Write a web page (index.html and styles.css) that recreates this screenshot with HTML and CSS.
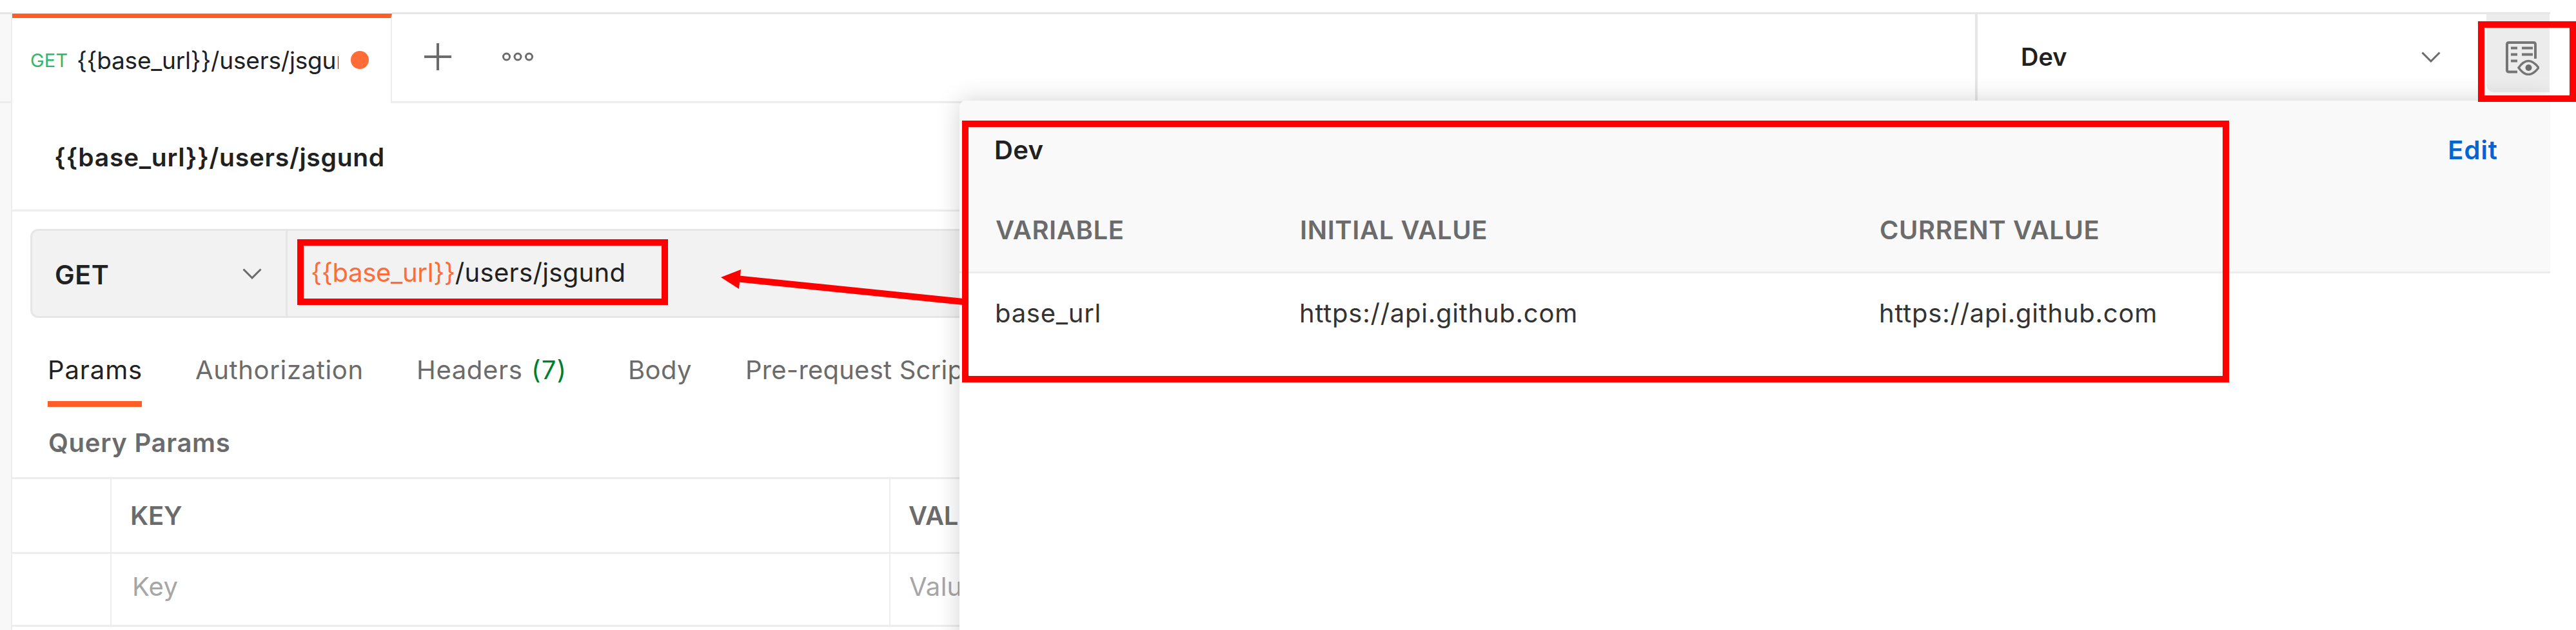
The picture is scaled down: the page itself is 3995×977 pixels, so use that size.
FILE: index.html
```html
<!DOCTYPE html>
<html lang="en">
<head>
<meta charset="utf-8">
<title>Request builder</title>
<link rel="stylesheet" href="styles.css">
</head>
<body>
<div class="app">
  <header class="tabbar">
    <div class="gutter"></div>
    <div class="tab">
      <span class="t tab-method">GET</span>
      <div class="tab-clip"><span class="t tab-name">{{base_url}}/users/jsgund</span></div>
      <i class="dot"></i>
    </div>
    <div class="tab-tools">
      <svg class="plus" viewBox="0 0 42 42"><path d="M21 0V42M0 21H42"/></svg>
      <svg class="more" viewBox="0 0 50 14"><circle cx="7.500" cy="7" r="5"/><circle cx="25" cy="7" r="5"/><circle cx="42.500" cy="7" r="5"/></svg>
    </div>
    <div class="env">
      <span class="t env-name">Dev</span>
      <svg class="chev env-chev" viewBox="0 0 30 17"><path d="M1.500 1.500L15 15L28.500 1.500"/></svg>
      <div class="eye-btn">
        <svg class="eye" viewBox="0 0 54 54"><path d="M20 48.500H7Q4 48.500 4 45.500V6Q4 3 7 3H45Q48 3 48 6V28" stroke-width="4"/><path d="M10 11.500H20M27 11.500H44M10 21.500H20M27 21.500H44M10 31.500H20" stroke-width="4"/><path d="M22 42Q37 21 53 42Q37 63 22 42Z" stroke-width="3.500"/><circle cx="37.500" cy="42" r="5" class="pupil"/></svg>
      </div>
    </div>
  </header>
  <div class="body">
    <div class="gutter"></div>
    <main class="work">
      <div class="title"><span class="t">{{base_url}}/users/jsgund</span></div>
      <div class="urlbar">
        <div class="method"><span class="t">GET</span><svg class="chev" viewBox="0 0 30 17"><path d="M1.500 1.500L15 15L28.500 1.500"/></svg></div>
        <div class="url"><span class="t var">{{base_url}}</span><span class="t path">/users/jsgund</span></div>
      </div>
      <nav class="subtabs">
        <span class="t on">Params</span>
        <span class="t st-auth">Authorization</span>
        <span class="t st-head">Headers</span>
        <span class="t count">(7)</span>
        <span class="t st-body">Body</span>
        <span class="t st-pre">Pre-request Script</span>
      </nav>
      <div class="section"><span class="t">Query Params</span></div>
      <div class="grid">
        <div class="row head"><div></div><div class="cell"><span class="t">KEY</span></div><div class="cell value"><span class="t">VALUE</span></div></div>
        <div class="row ph"><div></div><div class="cell"><span class="t">Key</span></div><div class="cell value"><span class="t">Value</span></div></div>
      </div>
    </main>
  </div>
  <aside class="popover">
    <div class="pop-head">
      <div class="pop-title"><span class="t name">Dev</span><span class="t edit">Edit</span></div>
      <div class="pop-cols"><span class="t">VARIABLE</span><span class="t">INITIAL VALUE</span><span class="t">CURRENT VALUE</span></div>
    </div>
    <div class="pop-cols vals"><span class="t">base_url</span><span class="t">https://api.github.com</span><span class="t">https://api.github.com</span></div>
  </aside>
  <div class="mark mark-url"></div>
  <div class="mark mark-vars"></div>
  <div class="mark mark-eye"></div>
  <svg class="arrow" viewBox="0 0 380 60"><path d="M28 17.500L376 53" class="shaft"/><path d="M0 15L31 3L28 33Z"/></svg>
</div>
</body>
</html>
```
FILE: styles.css
```css
* { box-sizing: border-box; }
body { margin: 0; background: #fff; font-family: Inter, "Liberation Sans", sans-serif; color: #212121; }
.app { position: relative; width: 3995px; height: 977px; padding: 19px 40px 0 0; overflow: hidden; display: flex; flex-direction: column; }
.t { white-space: nowrap; line-height: 50px; font-size: 40px; letter-spacing: .65px; flex: none; }
svg { display: block; flex: none; fill: none; }

.tabbar { display: flex; height: 141px; flex: none; }
.gutter { width: 19px; flex: none; background: #f8f8f8; border-right: 2px solid #ededed; }
.tabbar .gutter { border-top: 3px solid #e6e6e6; border-bottom: 3px solid #ededed; }
.tab { width: 589px; flex: none; margin-top: 2px; border-top: 7px solid #ff5e26; border-right: 2px solid #ededed; display: flex; padding: 41px 0 0 28px; }
.tab-method { font-size: 29px; color: #2fb865; width: 72px; letter-spacing: .2px; }
.tab-clip { width: 406px; overflow: hidden; height: 60px; }
.tab-name { font-size: 37px; letter-spacing: -.18px; display: block; }
.dot { width: 28px; height: 28px; border-radius: 50%; background: #ff6c37; margin: 10px 0 0 19px; }
.tab-tools { width: 2455px; flex: none; border-top: 3px solid #e6e6e6; border-bottom: 3px solid #ededed; display: flex; padding: 45px 0 0 50px; gap: 78px; }
.plus { width: 42px; height: 42px; stroke: #6b6b6b; stroke-width: 4; }
.more { width: 50px; height: 14px; stroke: #6b6b6b; stroke-width: 3; margin-top: 14px; }
.env { width: 892px; flex: none; border-top: 3px solid #e6e6e6; border-bottom: 3px solid #ededed; border-left: 4px solid #e6e6e6; display: flex; }
.env-name { font-size: 38px; font-weight: 600; letter-spacing: 0; margin: 41px 0 0 67px; width: 621px; }
.chev { width: 30px; height: 17px; stroke: #6b6b6b; stroke-width: 3; }
.env-chev { margin: 58px 71px 0 0; }
.eye-btn { width: 98px; height: 121px; background: #ececec; border-radius: 0 0 0 12px; padding: 41px 0 0 28px; }
.eye { width: 54px; height: 54px; stroke: #757575; }
.pupil { fill: #6b6b6b; stroke: none; }

.body { display: flex; flex: 1; }
.work { flex: 1; }
.title { height: 168px; border-bottom: 3px solid #ededed; padding: 59px 0 0 65px; }
.title .t { font-size: 39px; font-weight: 600; letter-spacing: .72px; display: block; }
.urlbar { margin: 27px 0 0 28px; height: 138px; border: 3px solid #e6e6e6; border-radius: 12px; background: #f2f2f2; display: flex; }
.method { width: 396px; border-right: 3px solid #e6e6e6; display: flex; padding: 43px 37px 0 35px; justify-content: space-between; }
.method .t { font-weight: 600; font-size: 41px; }
.method .chev { margin-top: 15px; }
.url { display: flex; padding: 40px 0 0 36px; }
.var { color: #ff6c37; letter-spacing: -.3px; }
.path { letter-spacing: .35px; }
.subtabs { display: flex; height: 138px; padding: 56px 0 0 55px; color: #6b6b6b; }
.on { color: #212121; height: 82px; border-bottom: 9px solid #ff5e26; width: 146px; margin-right: 83px; letter-spacing: .9px; }
.st-auth { width: 343px; }
.st-head { width: 178px; }
.count { color: #007f31; width: 150px; letter-spacing: 1.1px; }
.st-body { width: 182px; letter-spacing: .4px; }
.st-pre { letter-spacing: .2px; }
.section { height: 109px; padding: 31px 0 0 56px; color: #6b6b6b; }
.section .t { font-weight: 600; letter-spacing: .7px; display: block; }
.grid { border-top: 3px solid #ededed; }
.row { display: grid; grid-template-columns: 152px 1208px 1fr; height: 116px; border-bottom: 3px solid #ededed; color: #6b6b6b; }
.row.ph { height: 113px; color: #a6a6a6; }
.cell { border-left: 2px solid #ededed; padding: 32px 0 0 29px; }
.head .value { padding-left: 28px; }
.ph .cell { padding: 26px 0 0 32px; }
.ph .value { padding-left: 29px; }
.head .t { font-weight: 600; letter-spacing: -.2px; display: block; }
.ph .t { letter-spacing: .3px; display: block; }

.popover { position: absolute; left: 1488px; top: 156px; width: 2467px; height: 860px; background: #fff; border-radius: 10px 0 0 0; box-shadow: 0 0 36px rgba(0,0,0,.18); clip-path: inset(-60px 0 0 -60px); }
.pop-head { height: 268px; background: #f9f9f9; border-bottom: 3px solid #ededed; border-radius: 10px 0 0 0; padding-top: 52px; }
.pop-title { display: flex; justify-content: space-between; padding: 0 81px 0 54px; height: 124px; }
.name, .edit { font-weight: 600; }
.name { letter-spacing: .3px; }
.edit { color: #0265d2; letter-spacing: 1px; }
.pop-cols { display: grid; grid-template-columns: 472px 899px 1fr; padding-left: 56px; }
.pop-head .pop-cols { color: #6b6b6b; }
.pop-head .pop-cols .t { font-weight: 600; letter-spacing: .6px; }
.vals { padding-top: 37px; padding-left: 55px; color: #333; }
.vals .t { letter-spacing: .75px; }

.mark { position: absolute; border: 10px solid #f00; }
.mark-url { left: 461px; top: 371px; width: 575px; height: 102px; }
.mark-vars { left: 1492px; top: 187px; width: 1965px; height: 406px; }
.mark-eye { left: 3843px; top: 33px; width: 152px; height: 125px; }
.arrow { position: absolute; left: 1118px; top: 415px; width: 380px; height: 60px; fill: #f00; }
.shaft { stroke: #f00; stroke-width: 10; }
```
